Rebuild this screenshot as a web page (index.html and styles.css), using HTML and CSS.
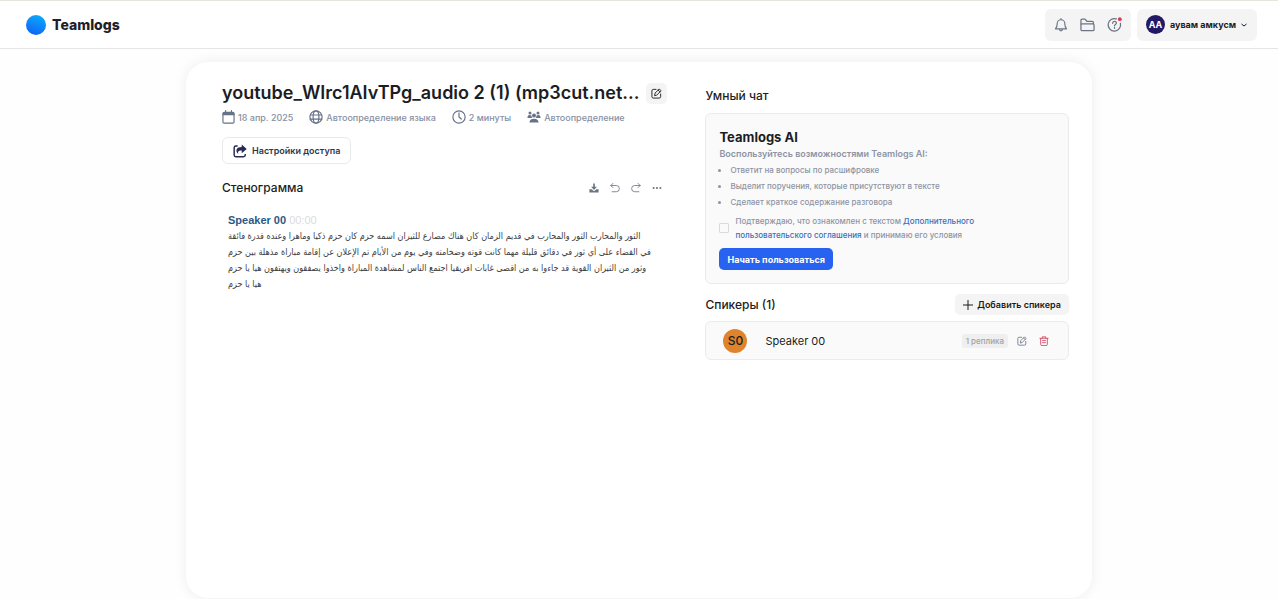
FILE: index.html
```html
<!DOCTYPE html>
<html lang="ru">
    <head>
        <meta charset="UTF-8">
        <meta name="viewport" content="width=device-width, initial-scale=1.0">
        <title>Teamlogs</title>
        <link rel="stylesheet" href="styles.css">
    </head>
    <body>
        <header class="header">
            <a class="logo" href="#"><span class="logo-ball"></span>Teamlogs</a>
            <div class="header-tools">
                <nav class="header-icons">
                    <button type="button" class="icon-btn" aria-label="Уведомления">
                        <svg width="14" height="14" viewBox="0 0 24 24" class="line"><path d="M2.5 18.5h19c-2-2-3-4-3-9a6.500 6.500 0 0 0-13 0c0 5-1 7-3 9zM12 3V1M9.500 19c0 4 5 4 5 0"/></svg>
                    </button>
                    <button type="button" class="icon-btn" aria-label="Файлы">
                        <svg width="15" height="14" viewBox="0 0 24 22" class="line"><path d="M1.500 18V3.500a2 2 0 0 1 2-2H8l3 3.500h8.500a2 2 0 0 1 2 2v2M1.500 18a2 2 0 0 0 2 2h17a2 2 0 0 0 2-2v-7a2 2 0 0 0-2-2h-17a2 2 0 0 0-2 2"/></svg>
                    </button>
                    <button type="button" class="icon-btn" aria-label="Помощь">
                        <svg width="15" height="15" viewBox="0 0 24 24" class="line"><path d="M15 3A10 10 0 1 0 21.500 10M9 10c0-4 6-4 6-.5 0 2.300-3 2.300-3 4.500M12 16.500v1.500"/><circle cx="20.500" cy="3.500" r="3" class="dot"/></svg>
                    </button>
                </nav>
                <button type="button" class="user">
                    <span class="user-avatar">AA</span>
                    <span>аувам амкусм</span>
                    <svg width="6" height="6" viewBox="0 0 12 12" class="chevron"><path d="M1 4l5 4 5-4"/></svg>
                </button>
            </div>
        </header>

        <main class="card">
            <section class="transcript">
                <div class="title-row">
                    <h1>youtube_WIrc1AIvTPg_audio 2 (1) (mp3cut.net...</h1>
                    <button type="button" class="edit-title" aria-label="Переименовать">
                        <svg width="11" height="11" viewBox="0 0 24 24" class="line"><path d="M11 3H5a3 3 0 0 0-3 3v13a3 3 0 0 0 3 3h13a3 3 0 0 0 3-3v-6M8 16l1-5 9-9 4 4-9 9zM15.500 4.500l4 4"/></svg>
                    </button>
                </div>
                <ul class="meta">
                    <li>
                        <svg width="13" height="14" viewBox="0 0 22 24" class="line"><rect x="1.500" y="4" width="19" height="18.500" rx="2"/><path d="M1.500 8h19M6 1v5M16 1v5M2 6h18"/></svg>
                        18 апр. 2025
                    </li>
                    <li>
                        <svg width="14" height="14" viewBox="0 0 24 24" class="line"><circle cx="12" cy="12" r="10.500"/><ellipse cx="12" cy="12" rx="5" ry="10.500"/><path d="M2 8.500h20M2 15.500h20"/></svg>
                        Автоопределение языка
                    </li>
                    <li>
                        <svg width="14" height="14" viewBox="0 0 24 24" class="line"><circle cx="12" cy="12" r="10.500"/><path d="M12 5v7l4 3.500"/></svg>
                        2 минуты
                    </li>
                    <li>
                        <svg width="14" height="12" viewBox="0 0 28 24" class="solid"><circle cx="6" cy="4" r="3"/><circle cx="22" cy="4" r="3"/><circle cx="14" cy="9" r="4"/><path d="M1 13c0-6 5-6 8-4 0 3 1 4 2 5H1zM27 13c0-6-5-6-8-4 0 3-1 4-2 5h10zM5 22c0-9 18-9 18 0v1H5z"/></svg>
                        Автоопределение
                    </li>
                </ul>
                <button type="button" class="access">
                    <svg width="14" height="14" viewBox="0 0 24 24"><path class="stroke" d="M8 3.500H5a3 3 0 0 0-3 3V19a3 3 0 0 0 3 3h13a3 3 0 0 0 3-3v-2"/><path class="fill" d="M15 1l8.500 7.500L15 16v-5c-5 0-7 1-6 6-6-6-3-12 6-12z"/></svg>
                    Настройки доступа
                </button>
                <div class="section-row">
                    <h2>Стенограмма</h2>
                    <div class="text-tools">
                        <button type="button" class="icon-btn" aria-label="Скачать">
                            <svg width="10" height="10" viewBox="0 0 24 24" class="solid"><path d="M10 1h4v8h5l-7 8-7-8h5zM1 15h5l6 5 6-5h5v8H1z"/></svg>
                        </button>
                        <button type="button" class="icon-btn" aria-label="Отменить">
                            <svg width="10" height="10" viewBox="0 0 24 24" class="line"><path d="M7 1L2 6l5 5M2 6h13a7.500 7.500 0 0 1 0 15H5"/></svg>
                        </button>
                        <button type="button" class="icon-btn" aria-label="Повторить">
                            <svg width="10" height="10" viewBox="0 0 24 24" class="line"><path d="M17 1l5 5-5 5M22 6H9a7.500 7.500 0 0 0 0 15h10"/></svg>
                        </button>
                        <button type="button" class="icon-btn" aria-label="Ещё">
                            <svg width="10" height="10" viewBox="0 0 24 24" class="solid"><circle cx="4" cy="12" r="2.500"/><circle cx="12" cy="12" r="2.500"/><circle cx="20" cy="12" r="2.500"/></svg>
                        </button>
                    </div>
                </div>
                <article class="replica">
                    <p class="replica-head"><b>Speaker 00</b> <time>00:00</time></p>
                    <p class="replica-text" lang="ar">
                        <span>الثور والمحارب الثور والمحارب في قديم الزمان كان هناك مصارع للثيران اسمه حزم كان حزم ذكيا وماهرا وعنده قدرة فائقة</span>
                        <span>في القضاء على أي ثور في دقائق قليلة مهما كانت قوته وضخامته وفي يوم من الأيام تم الإعلان عن إقامة مباراة مذهلة بين حزم</span>
                        <span>وثور من الثيران القوية قد جاءوا به من اقصى غابات افريقيا اجتمع الناس لمشاهدة المباراة واخذوا يصفقون ويهتفون هيا يا حزم</span>
                        <span>هيا يا حزم</span>
                    </p>
                </article>
            </section>

            <aside class="side">
                <h2>Умный чат</h2>
                <div class="panel ai">
                    <h3>Teamlogs AI</h3>
                    <p class="ai-lead">Воспользуйтесь возможностями Teamlogs AI:</p>
                    <ul class="ai-list">
                        <li>Ответит на вопросы по расшифровке</li>
                        <li>Выделит поручения, которые присутствуют в тексте</li>
                        <li>Сделает краткое содержание разговора</li>
                    </ul>
                    <div class="agree">
                        <input type="checkbox" id="agree">
                        <label for="agree">Подтверждаю, что ознакомлен с текстом <a href="#">Дополнительного пользовательского соглашения</a> и принимаю его условия</label>
                    </div>
                    <button type="button" class="start">Начать пользоваться</button>
                </div>
                <div class="speakers-row">
                    <h2>Спикеры (1)</h2>
                    <button type="button" class="add">
                        <svg width="10" height="10" viewBox="0 0 10 10"><path d="M5 0v10M0 5h10"/></svg>
                        Добавить спикера
                    </button>
                </div>
                <div class="panel speaker">
                    <span class="speaker-avatar">S0</span>
                    <span class="speaker-name">Speaker 00</span>
                    <span class="count">1 реплика</span>
                    <button type="button" class="icon-btn" aria-label="Изменить">
                        <svg width="10" height="10" viewBox="0 0 24 24" class="line"><path d="M11 3H5a3 3 0 0 0-3 3v13a3 3 0 0 0 3 3h13a3 3 0 0 0 3-3v-6M8 16l1-5 9-9 4 4-9 9zM15.500 4.500l4 4"/></svg>
                    </button>
                    <button type="button" class="icon-btn delete" aria-label="Удалить">
                        <svg width="10" height="10" viewBox="0 0 24 24" class="line"><path d="M2 5.500h20M8 5V2h8v3M4 6v14a3 3 0 0 0 3 3h10a3 3 0 0 0 3-3V6M8.500 11h7M8.500 16h7"/></svg>
                    </button>
                </div>
            </aside>
        </main>
    </body>
</html>
```
FILE: styles.css
```css
* {
    box-sizing: border-box;
}

body {
    margin: 0;
    background-color: #fefefe;
    color: #1c1d22;
    font-family: Inter, "Liberation Sans", sans-serif;
    font-size: 9px;
}

h1, h2, h3, p, ul {
    margin: 0;
    padding: 0;
}

ul {
    list-style: none;
}

button {
    font-family: inherit;
    border: none;
    padding: 0;
    background: none;
    color: inherit;
    cursor: pointer;
}

svg {
    display: block;
    flex: none;
}

a {
    color: #3472bd;
    text-decoration: none;
}

h2 {
    font-size: 12px;
    line-height: 16px;
    font-weight: 500;
}

.line {
    fill: none;
    stroke: currentColor;
    stroke-width: 2;
    stroke-linecap: round;
    stroke-linejoin: round;
}

.solid {
    fill: currentColor;
}

.icon-btn {
    display: flex;
    color: #6b7385;
}

/* header */
.header {
    display: flex;
    justify-content: space-between;
    align-items: center;
    height: 49px;
    padding: 0 21px 0 26px;
    background-color: white;
    border-top: 1px solid #e6e6dc;
    border-bottom: 1px solid #e4e5e4;
}

.logo {
    display: flex;
    align-items: center;
    gap: 6px;
    color: #1f1e2b;
    font-size: 14px;
    font-weight: 800;
}

.logo-ball {
    width: 20px;
    height: 20px;
    border-radius: 50%;
    background: linear-gradient(200deg, #0bb2fc, #0f5cf5);
}

.header-tools {
    display: flex;
    gap: 6px;
}

.header-icons, .user {
    display: flex;
    align-items: center;
    height: 32px;
    border-radius: 6px;
    background-color: #f4f4f4;
}

.header-icons {
    gap: 12px;
    padding: 0 9px;
}

.dot {
    fill: #e2364f;
    stroke: none;
}

.user {
    gap: 5px;
    padding: 0 10px 0 9px;
    font-size: 9px;
    font-weight: 700;
}

.user-avatar {
    width: 19px;
    border-radius: 50%;
    background-color: #231965;
    color: white;
    line-height: 19px;
    text-align: center;
}

.chevron {
    fill: none;
    stroke: currentColor;
    stroke-width: 2;
}

/* main card */
.card {
    display: grid;
    grid-template-columns: minmax(0, 446fr) minmax(0, 364fr);
    gap: 38px;
    max-width: 906px;
    min-height: calc(100vh - 63px);
    margin: 13px auto 1px;
    padding: 20px 23px 20px 36px;
    border-radius: 22px;
    background-color: white;
    box-shadow: 0 0 14px rgba(0, 0, 0, 0.07);
}

.title-row, .section-row, .speakers-row {
    display: flex;
    align-items: center;
    justify-content: space-between;
}

h1 {
    font-size: 18px;
    line-height: 22px;
    font-weight: 600;
    white-space: nowrap;
}

.edit-title {
    display: flex;
    align-items: center;
    justify-content: center;
    width: 21px;
    height: 21px;
    border-radius: 5px;
    background-color: #f4f4f4;
}

.meta {
    display: flex;
    gap: 16px;
    margin-top: 6px;
    color: #8790a3;
    font-weight: 500;
    white-space: nowrap;
}

.meta li {
    display: flex;
    align-items: center;
    gap: 3px;
    height: 14px;
}

.meta svg {
    color: #66718a;
}

.access {
    display: flex;
    align-items: center;
    gap: 5px;
    height: 27px;
    margin-top: 13px;
    padding: 0 10px;
    border: 1px solid #e9eaec;
    border-radius: 6px;
    color: #30364d;
    font-size: 9px;
    font-weight: 600;
}

.access .stroke {
    fill: none;
    stroke: #252b53;
    stroke-width: 2.5;
}

.access .fill {
    fill: #252b53;
}

.section-row {
    margin-top: 16px;
    padding-right: 5px;
}

.text-tools {
    display: flex;
    gap: 11px;
}

.replica {
    margin-top: 16px;
    padding-left: 6px;
}

.replica-head {
    font-family: "Liberation Sans", Arial, sans-serif;
    font-size: 11px;
    line-height: 16px;
}

.replica-head b {
    color: #2d5885;
}

.replica-head time {
    color: #dcdcdc;
}

.replica-text {
    font-family: "DejaVu Sans Condensed", "DejaVu Sans", sans-serif;
    font-size: 9px;
    line-height: 16px;
    color: #3c3c3c;
}

.replica-text span {
    display: block;
    white-space: nowrap;
}

/* right column */
.side > h2 {
    margin-top: 6px;
}

.panel {
    border: 1px solid #ebebed;
    border-radius: 6px;
    background-color: #fafafa;
}

.ai {
    margin-top: 9px;
    padding: 14px 13px 13px;
    color: #8e94a3;
}

.ai h3 {
    color: #1c1d22;
    font-size: 13px;
    line-height: 18px;
    font-weight: 700;
}

.ai-lead {
    font-size: 9px;
    line-height: 16px;
    font-weight: 600;
}

.ai-list {
    padding-left: 11px;
    list-style: disc;
    font-size: 8px;
    line-height: 16px;
    font-weight: 500;
}

.agree {
    display: flex;
    align-items: center;
    gap: 6px;
    margin-top: 4px;
    font-size: 8px;
    line-height: 14px;
    font-weight: 500;
}

.agree input {
    appearance: none;
    flex: none;
    width: 10px;
    height: 10px;
    margin: 0;
    border: 1px solid #d9dadd;
    border-radius: 1px;
}

.agree label {
    max-width: 260px;
}

.start {
    height: 22px;
    margin-top: 6px;
    padding: 0 8px;
    border-radius: 5px;
    background-color: #2862f0;
    color: white;
    font-size: 9px;
    font-weight: 700;
}

.speakers-row {
    margin-top: 10px;
}

.add {
    display: flex;
    align-items: center;
    gap: 4px;
    height: 21px;
    padding: 0 8px;
    border-radius: 5px;
    background-color: #f4f4f4;
    font-size: 9px;
    font-weight: 600;
}

.add path {
    stroke: currentColor;
}

.speaker {
    display: flex;
    align-items: center;
    height: 39px;
    margin-top: 6px;
    padding: 0 19px 0 17px;
}

.speaker-avatar {
    width: 24px;
    border-radius: 50%;
    background-color: #df842c;
    font-size: 12px;
    line-height: 24px;
    font-weight: 500;
    text-align: center;
}

.speaker-name {
    margin-left: 18px;
    font-size: 11px;
}

.count {
    margin-left: auto;
    padding: 0 4px;
    border-radius: 3px;
    background-color: #efefef;
    color: #a2a2a2;
    font-size: 8px;
    line-height: 14px;
    font-weight: 500;
}

.speaker .icon-btn {
    margin-left: 9px;
}

.speaker .delete {
    margin-left: 12px;
    color: #d0405a;
}
```
